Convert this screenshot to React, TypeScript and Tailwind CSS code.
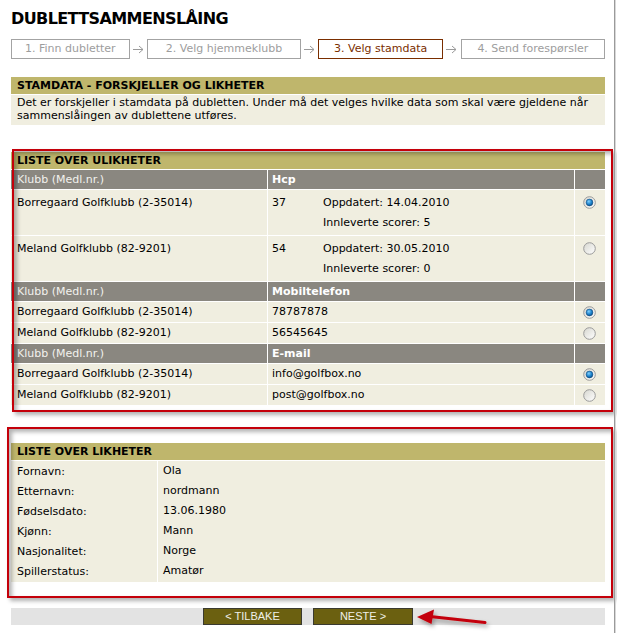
import React from "react";

const steps = [
  { label: "1. Finn dubletter", w: "w-[120px]", active: false },
  { label: "2. Velg hjemmeklubb", w: "w-[155px]", active: false },
  { label: "3. Velg stamdata", w: "w-[126px]", active: true },
  { label: "4. Send forespørsler", w: "w-[146px]", active: false },
];

const likheter = [
  ["Fornavn:", "Ola"],
  ["Etternavn:", "nordmann"],
  ["Fødselsdato:", "13.06.1980"],
  ["Kjønn:", "Mann"],
  ["Nasjonalitet:", "Norge"],
  ["Spillerstatus:", "Amatør"],
];

function Radio({ checked }: { checked?: boolean }) {
  return (
    <svg width="13" height="13" viewBox="0 0 13 13">
      <defs>
        <linearGradient id="rbg" x1="0" y1="0" x2="1" y2="1">
          <stop offset="0" stopColor="#d6d6cf" />
          <stop offset="1" stopColor="#ffffff" />
        </linearGradient>
        <radialGradient id="rdot" cx="0.4" cy="0.35" r="0.7">
          <stop offset="0" stopColor="#7fd0ff" />
          <stop offset="0.6" stopColor="#1a7fc8" />
          <stop offset="1" stopColor="#0b4f8a" />
        </radialGradient>
      </defs>
      <circle cx="6.5" cy="6.5" r="5.8" fill="url(#rbg)" stroke="#9a9a9a" strokeWidth="1" />
      {checked && <circle cx="6.5" cy="6.5" r="3.4" fill="url(#rdot)" stroke="#0b3f70" strokeWidth="0.5" />}
    </svg>
  );
}

function ColHeader({ title }: { title: string }) {
  return (
    <div className="grid grid-cols-[256px_306px_30px] gap-x-px bg-white h-[20px] border-b border-white">
      <div className="bg-[#8a8780] text-[#f2f2ee] px-[6px] leading-[19px]">Klubb (Medl.nr.)</div>
      <div className="bg-[#8a8780] text-white font-bold px-[4px] leading-[19px]">{title}</div>
      <div className="bg-[#8a8780]" />
    </div>
  );
}

function SimpleRow({ club, value, checked }: { club: string; value: string; checked?: boolean }) {
  return (
    <div className="grid grid-cols-[256px_306px_30px] gap-x-px bg-white h-[21px] border-b border-white">
      <div className="bg-[#f0eee0] px-[6px] leading-[20px]">{club}</div>
      <div className="bg-[#f0eee0] px-[4px] leading-[20px]">{value}</div>
      <div className="bg-[#f0eee0] flex items-center justify-center pr-px">
        <Radio checked={checked} />
      </div>
    </div>
  );
}

function HcpRow({ club, hcp, date, scores, checked }: { club: string; hcp: string; date: string; scores: string; checked?: boolean }) {
  return (
    <div className="grid grid-cols-[256px_306px_30px] gap-x-px bg-white h-[46px] border-b border-white">
      <div className="bg-[#f0eee0] px-[6px] pt-[3px] leading-[20px]">{club}</div>
      <div className="bg-[#f0eee0] px-[4px] pt-[3px] leading-[20px] flex">
        <div className="w-[51px]">{hcp}</div>
        <div>
          <div>Oppdatert: {date}</div>
          <div>Innleverte scorer: {scores}</div>
        </div>
      </div>
      <div className="bg-[#f0eee0] flex justify-center pt-[6px] pr-px">
        <Radio checked={checked} />
      </div>
    </div>
  );
}

export default function App() {
  return (
    <div className="relative w-[617px] h-[633px] overflow-hidden bg-white text-[11px] text-black font-['DejaVu_Sans','Verdana',sans-serif]">
      <div className="pl-[11px] pr-[12px]">
        <h1 className="pt-[9px] text-[16px] leading-[20px] font-bold tracking-[-0.6px]">DUBLETTSAMMENSLÅING</h1>

        {/* Steps */}
        <div className="mt-[10px] flex items-center">
          {steps.map((s, i) => (
            <React.Fragment key={s.label}>
              {i > 0 && (
                <div className="w-[18px] flex justify-center">
                  <svg width="11" height="9" viewBox="0 0 11 9">
                    <path d="M0 4.5H10M6 1L10 4.5L6 8" fill="none" stroke="#9a9a9a" strokeWidth="1" />
                  </svg>
                </div>
              )}
              <div
                className={
                  s.active
                    ? `${s.w} h-[20px] border border-[#7a2e00] text-[#7a2e00] flex items-center justify-center`
                    : `${s.w} h-[20px] border border-[#a3a3a3] text-[#9d9d9d] flex items-center justify-center`
                }
              >
                {s.label}
              </div>
            </React.Fragment>
          ))}
        </div>

        {/* Stamdata */}
        <div className="mt-[18px]">
          <div className="bg-[#bfb66c] h-[18px] px-[6px] font-bold leading-[18px] border-b border-white">STAMDATA - FORSKJELLER OG LIKHETER</div>
          <div className="bg-[#f0eee0] px-[6px] pt-[1px] pb-[3px] leading-[13px]">
            Det er forskjeller i stamdata på dubletten. Under må det velges hvilke data som skal være gjeldene når sammenslåingen av dublettene utføres.
          </div>
        </div>

        {/* Ulikheter */}
        <div className="mt-[27px]">
          <div className="bg-[#bfb66c] h-[18px] px-[6px] font-bold leading-[17px] border-b border-white">LISTE OVER ULIKHETER</div>
          <ColHeader title="Hcp" />
          <HcpRow club="Borregaard Golfklubb (2-35014)" hcp="37" date="14.04.2010" scores="5" checked />
          <HcpRow club="Meland Golfklubb (82-9201)" hcp="54" date="30.05.2010" scores="0" />
          <ColHeader title="Mobiltelefon" />
          <SimpleRow club="Borregaard Golfklubb (2-35014)" value="78787878" checked />
          <SimpleRow club="Meland Golfklubb (82-9201)" value="56545645" />
          <ColHeader title="E-mail" />
          <SimpleRow club="Borregaard Golfklubb (2-35014)" value="info@golfbox.no" checked />
          <SimpleRow club="Meland Golfklubb (82-9201)" value="post@golfbox.no" />
        </div>

        {/* Likheter */}
        <div className="mt-[37px]">
          <div className="bg-[#bfb66c] h-[18px] px-[6px] font-bold leading-[18px] border-b border-white">LISTE OVER LIKHETER</div>
          {likheter.map(([k, v]) => (
            <div key={k} className="grid grid-cols-[146px_1fr] gap-x-px bg-white h-[20px] border-b border-white">
              <div className="bg-[#f0eee0] px-[6px] leading-[20px] pt-px">{k}</div>
              <div className="bg-[#f0eee0] px-[5px] leading-[19px]">{v}</div>
            </div>
          ))}
        </div>

        {/* Buttons */}
        <div className="mt-[27px] bg-[#e3e3e3] h-[17px] flex justify-center gap-[11px]">
          <button className="w-[99px] h-[17px] bg-[#6b6010] border border-[#3a3a30] text-[#f0f0e8] font-['Liberation_Sans',Arial,sans-serif] text-[11px] leading-[15px]">
            &lt; TILBAKE
          </button>
          <button className="w-[100px] h-[17px] bg-[#6b6010] border border-[#3a3a30] text-[#f0f0e8] font-['Liberation_Sans',Arial,sans-serif] text-[11px] leading-[15px]">
            NESTE &gt;
          </button>
        </div>
      </div>

      {/* Annotations */}
      <div className="absolute left-[12px] top-[149px] w-[601px] h-[263px] border-2 border-[#c4000a] shadow-[3px_3px_4px_rgba(0,0,0,0.3),inset_3px_3px_4px_rgba(0,0,0,0.3)] pointer-events-none" />
      <div className="absolute left-[7px] top-[427px] w-[606px] h-[171px] border-2 border-[#c4000a] shadow-[3px_3px_4px_rgba(0,0,0,0.3),inset_3px_3px_4px_rgba(0,0,0,0.3)] pointer-events-none" />
      <svg className="absolute left-[410px] top-[603px] pointer-events-none" width="90" height="30" viewBox="0 0 90 30">
        <defs>
          <filter id="ash" x="-20%" y="-50%" width="140%" height="200%">
            <feDropShadow dx="2" dy="3" stdDeviation="2" floodColor="#000" floodOpacity="0.35" />
          </filter>
        </defs>
        <g filter="url(#ash)">
          <path d="M75 19.5L20 13.5" stroke="#c4000a" strokeWidth="3" strokeLinecap="round" />
          <path d="M7 14L24 6.5L21.5 21Z" fill="#c4000a" />
        </g>
      </svg>
      <div className="absolute right-[2px] top-0 w-px h-full bg-[#9a9a9a]" />
      <div className="absolute right-[1px] top-0 w-px h-full bg-[#d8d8d8]" />
    </div>
  );
}
